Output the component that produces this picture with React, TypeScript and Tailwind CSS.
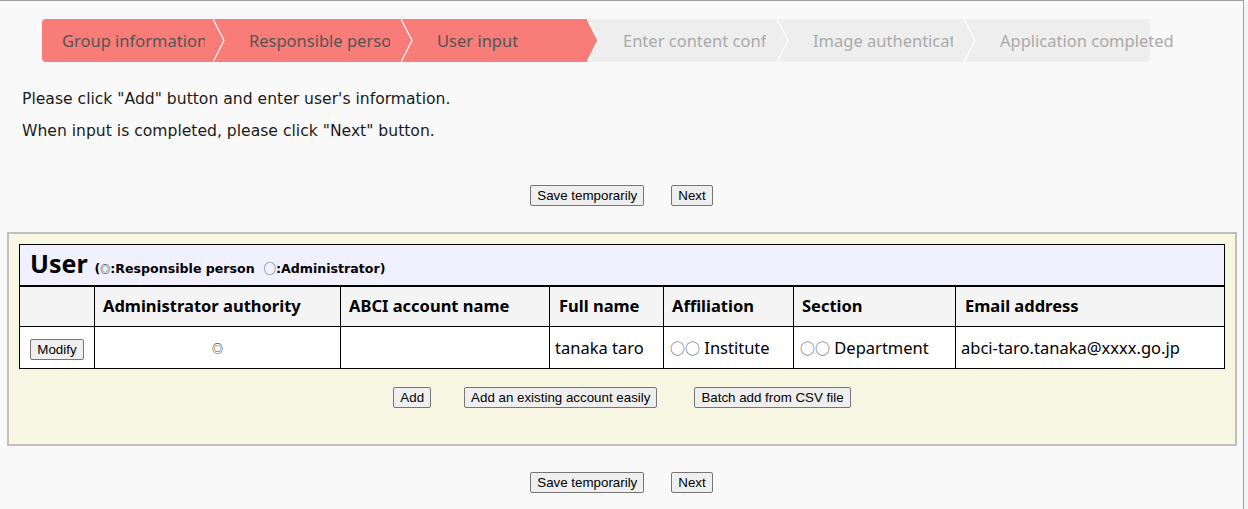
import React from "react";

const steps = [
  { label: "Group information", width: 171, active: true },
  { label: "Responsible person", width: 188, active: true },
  { label: "User input", width: 186, active: true },
  { label: "Enter content confirmation", width: 190, active: false },
  { label: "Image authentication", width: 187, active: false },
  { label: "Application completed", width: 186, active: false },
];

const btn =
  "rounded-[2px] border border-[#767676] bg-[#efefef] px-[6px] py-[1px] font-['Liberation_Sans',Arial,sans-serif] text-[13.33px] leading-[17px] text-black";

const cjk = "font-['Noto_Sans_CJK_JP',sans-serif]";

function Stepper() {
  return (
    <div className="ml-[42px] mt-[18px] flex h-[43px] font-['Noto_Sans',sans-serif] text-[16.5px]">
      {steps.map((s, i) => {
        const first = i === 0;
        const last = i === steps.length - 1;
        const fill = s.active ? "#f87c78" : "#eeeeee";
        return (
          <div
            key={s.label}
            style={{ width: s.width, zIndex: steps.length - i }}
            className={`relative flex h-full items-center pt-[2px] ${
              s.active ? "bg-[#f87c78] text-[#555555]" : "bg-[#eeeeee] text-[#aaaaaa]"
            } ${first ? "rounded-l-[4px] pl-[20px] pr-[8px]" : "pl-[36px] pr-[11px]"} ${
              last ? "rounded-r-[4px]" : ""
            }`}
          >
            <span className={`block whitespace-nowrap ${last ? "" : "overflow-hidden"}`}>
              {s.label}
            </span>
            {!last && (
              <svg
                className="absolute left-full top-0"
                width="12"
                height="43"
                viewBox="0 0 12 43"
              >
                <polygon points="0,0 11,21.5 0,43" fill={fill} />
                <polyline
                  points="0,0 11,21.5 0,43"
                  fill="none"
                  stroke="#ffffff"
                  strokeWidth="1.2"
                />
              </svg>
            )}
          </div>
        );
      })}
    </div>
  );
}

function ButtonRow() {
  return (
    <div className="flex justify-center gap-[27px]">
      <button className={btn}>Save temporarily</button>
      <button className={btn}>Next</button>
    </div>
  );
}

export default function App() {
  return (
    <div className="flex h-[509px] w-full bg-[#f9f9f9]">
      <div className="h-full w-[1244px] overflow-hidden border-r border-t border-[#a0a0a0]">
        <Stepper />

        <div className="mt-[21px] pl-[22px] font-['DejaVu_Sans',sans-serif] text-[15.6px] leading-[32px] text-[#1a1a1a]">
          <p>Please click "Add" button and enter user's information.</p>
          <p>When input is completed, please click "Next" button.</p>
        </div>

        <div className="mt-[38px]">
          <ButtonRow />
        </div>

        <div className="ml-[7px] mr-[6px] mt-[26px] border-2 border-[#c0c0c0] bg-[#f8f7e3] px-[10px] pb-[36px] pt-[10px]">
          <table className="w-full table-fixed border-collapse font-['Noto_Sans',sans-serif] text-black">
            <colgroup>
              <col className="w-[75px]" />
              <col className="w-[246px]" />
              <col className="w-[209px]" />
              <col className="w-[114px]" />
              <col className="w-[130px]" />
              <col className="w-[162px]" />
              <col />
            </colgroup>
            <tbody>
              <tr className="h-[41px]">
                <td
                  colSpan={7}
                  className="border border-b-2 border-black bg-[#f0f0ff] pl-[10px] align-middle"
                >
                  <span className="text-[25px] font-bold leading-none">User</span>
                  <span className="ml-[7px] font-['DejaVu_Sans',sans-serif] text-[12.6px] font-bold">
                    (<span className={`${cjk} text-[10px] font-normal`}>◎</span>:Responsible person&nbsp;&nbsp;
                    <span className={`${cjk} font-normal text-[#555555]`}>○</span>:Administrator)
                  </span>
                </td>
              </tr>
              <tr className="h-[41px] bg-[#f4f4f4] text-left text-[16.5px] font-bold">
                <th className="border border-black"></th>
                <th className="border border-black pl-[8px]">Administrator authority</th>
                <th className="border border-black pl-[8px]">ABCI account name</th>
                <th className="border border-black pl-[9px]">Full name</th>
                <th className="border border-black pl-[8px]">Affiliation</th>
                <th className="border border-black pl-[8px]">Section</th>
                <th className="border border-black pl-[9px]">Email address</th>
              </tr>
              <tr className="h-[42px] bg-white text-[16.5px]">
                <td className="border border-black pt-[2px] text-center">
                  <button className={btn}>Modify</button>
                </td>
                <td className={`border border-black pt-[2px] text-center text-[11px] ${cjk}`}>◎</td>
                <td className="border border-black"></td>
                <td className="whitespace-nowrap border border-black pl-[5px] pt-[2px]">tanaka taro</td>
                <td className="whitespace-nowrap border border-black pl-[6px] pt-[2px]">
                  <span className={`${cjk} text-[15px] text-[#666666]`}>○○</span> Institute
                </td>
                <td className="whitespace-nowrap border border-black pl-[6px] pt-[2px]">
                  <span className={`${cjk} text-[15px] text-[#666666]`}>○○</span> Department
                </td>
                <td className="whitespace-nowrap border border-black pl-[5px] pt-[2px]">
                  abci-taro.tanaka@xxxx.go.jp
                </td>
              </tr>
            </tbody>
          </table>

          <div className="mt-[18px] flex justify-center">
            <button className={`${btn} mr-[33px]`}>Add</button>
            <button className={`${btn} mr-[37px]`}>Add an existing account easily</button>
            <button className={btn}>Batch add from CSV file</button>
          </div>
        </div>

        <div className="mt-[26px]">
          <ButtonRow />
        </div>
      </div>
      <div className="h-full flex-1 bg-[#f3f3f3]" />
    </div>
  );
}
